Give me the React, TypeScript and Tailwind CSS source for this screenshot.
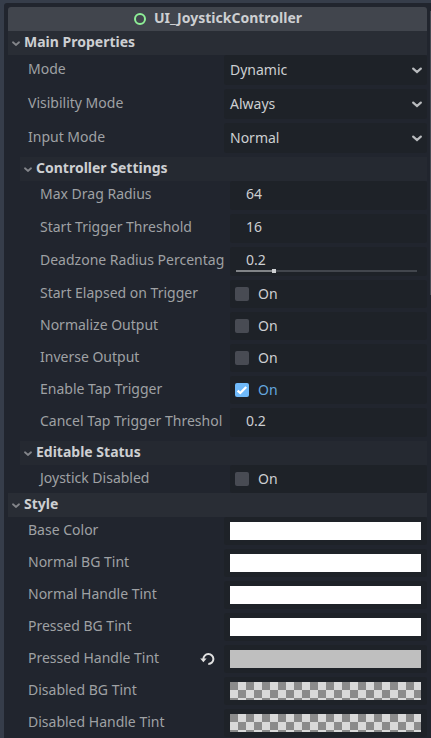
import type { ReactNode } from "react";

function Chevron({ className, width }: { className: string; width: number }) {
  return (
    <svg className={className} width={width} height={width * 0.7} viewBox="0 0 10 7" fill="none">
      <path d="M1.2 1.6 5 5 8.8 1.6" stroke="currentColor" strokeWidth="2.2" strokeLinecap="round" />
    </svg>
  );
}

function Section({ title, nested = false }: { title: string; nested?: boolean }) {
  return (
    <div className={`flex h-6 shrink-0 pl-1 ${nested ? "ml-3 bg-[#252931]" : "bg-[#292d35]"}`}>
      <Chevron className="mt-[9.5px] shrink-0 text-[#84868b]" width={8} />
      <span className="ml-1 text-[14px] leading-[22px] font-bold text-[#cdcfd2]">{title}</span>
    </div>
  );
}

function Row({
  label,
  nested = false,
  size = "h-[28px]",
  tall = false,
  last = false,
  reset = false,
  children,
}: {
  label: string;
  nested?: boolean;
  size?: string;
  tall?: boolean;
  last?: boolean;
  reset?: boolean;
  children: ReactNode;
}) {
  return (
    <div className={`flex shrink-0 ${size} ${last ? "" : "mb-1"}`}>
      <div
        className={`flex shrink-0 justify-between overflow-hidden text-[14px] whitespace-nowrap text-[#9fa1a4] ${
          nested ? "w-[216px] pl-8" : "w-[216px] pl-5"
        } ${tall ? "leading-[27px]" : "leading-[25px]"}`}
      >
        <span>{label}</span>
        {reset && (
          <svg className="mt-[7px] mr-2 shrink-0" width="16" height="14" viewBox="0 0 16 14" fill="none">
            <path d="M3.4 7.2A5 5 0 1 1 8.3 12" stroke="#e0e0e0" strokeWidth="2" />
            <path d="M.2 6.6h6.4L3.4 10.2Z" fill="#e0e0e0" />
          </svg>
        )}
      </div>
      <div className={`min-w-0 flex-1 rounded-[3px] bg-[#1e2228] text-[14px] text-[#cdcfd2] ${nested ? "ml-[6px]" : ""}`}>
        {children}
      </div>
    </div>
  );
}

function Dropdown({ label, value, last }: { label: string; value: string; last?: boolean }) {
  return (
    <Row label={label} size="h-[30px]" tall last={last}>
      <div className="flex justify-between pr-[5px] pl-[6px] leading-[29px]">
        <span>{value}</span>
        <Chevron className="mt-[11.5px] text-[#b9bbbe]" width={10} />
      </div>
    </Row>
  );
}

function NumberField({ label, value, last, slider }: { label: string; value: string; last?: boolean; slider?: boolean }) {
  return (
    <Row label={label} nested size="h-[29px]" last={last}>
      <div className="h-[22px] pl-4 leading-[25px]">{value}</div>
      {slider && (
        <div className="ml-[6px] flex w-[181px] items-center">
          <div className="h-[2px] w-[36px] bg-[#818488]" />
          <div className="h-1 w-1 bg-[#cdcfd2]" />
          <div className="h-[2px] flex-1 bg-[#42464d]" />
        </div>
      )}
    </Row>
  );
}

function Toggle({ label, on = false, last }: { label: string; on?: boolean; last?: boolean }) {
  return (
    <Row label={label} nested last={last}>
      <div className="flex pl-[5px] leading-[27px]">
        <div className={`mt-[7px] h-[14px] w-[14px] rounded-[2px] ${on ? "bg-[#70bafa]" : "bg-[#484b53]"}`}>
          {on && (
            <svg width="14" height="14" viewBox="0 0 14 14" fill="none">
              <path d="M2.6 7.6 5.3 10 11.2 4" stroke="#fff" strokeWidth="2.3" />
            </svg>
          )}
        </div>
        <span className={`ml-[9px] ${on ? "text-[#64a6de]" : ""}`}>On</span>
      </div>
    </Row>
  );
}

function Swatch({ label, fill, reset }: { label: string; fill: string; reset?: boolean }) {
  return (
    <Row label={label} reset={reset}>
      <div className="px-[6px] pt-[5px]">
        <div className={`h-[18px] ${fill}`} />
      </div>
    </Row>
  );
}

const checker = "bg-[repeating-conic-gradient(#d9d9d9_0_25%,#8b8b8b_0_50%)] bg-[length:16px_16px]";

export default function App() {
  return (
    <div className="flex h-[738px] w-[431px] overflow-hidden bg-[#363d4a] pt-[3px] pl-1 font-['Noto_Sans',sans-serif]">
      <div className="flex min-w-0 flex-1 rounded-tl-[3px] bg-[#21252e]">
        <div className="flex w-[419px] shrink-0 flex-col pt-1 ml-1">
          <div className="flex h-6 shrink-0 justify-center rounded-t-[3px] bg-[#41454d]">
            <svg className="mt-[5px]" width="14" height="14" viewBox="0 0 14 14">
              <circle cx="7" cy="7" r="5" fill="none" stroke="#8eef97" strokeWidth="2" />
            </svg>
            <span className="ml-[7px] text-[14px] leading-[22px] font-bold text-[#cdcfd2]">UI_JoystickController</span>
          </div>
          <Section title="Main Properties" />
          <Dropdown label="Mode" value="Dynamic" />
          <Dropdown label="Visibility Mode" value="Always" />
          <Dropdown label="Input Mode" value="Normal" />
          <Section title="Controller Settings" nested />
          <NumberField label="Max Drag Radius" value="64" />
          <NumberField label="Start Trigger Threshold" value="16" />
          <NumberField label="Deadzone Radius Percentag" value="0.2" slider />
          <Toggle label="Start Elapsed on Trigger" />
          <Toggle label="Normalize Output" />
          <Toggle label="Inverse Output" />
          <Toggle label="Enable Tap Trigger" on />
          <NumberField label="Cancel Tap Trigger Threshol" value="0.2" />
          <Section title="Editable Status" nested />
          <Toggle label="Joystick Disabled" last />
          <Section title="Style" />
          <Swatch label="Base Color" fill="bg-white" />
          <Swatch label="Normal BG Tint" fill="bg-white" />
          <Swatch label="Normal Handle Tint" fill="bg-white" />
          <Swatch label="Pressed BG Tint" fill="bg-white" />
          <Swatch label="Pressed Handle Tint" fill="bg-[#bfbfbf]" reset />
          <Swatch label="Disabled BG Tint" fill={checker} />
          <Swatch label="Disabled Handle Tint" fill={checker} />
        </div>
        <div className="mt-2 ml-[3px] h-[284px] w-px bg-[#484b53]" />
      </div>
    </div>
  );
}
